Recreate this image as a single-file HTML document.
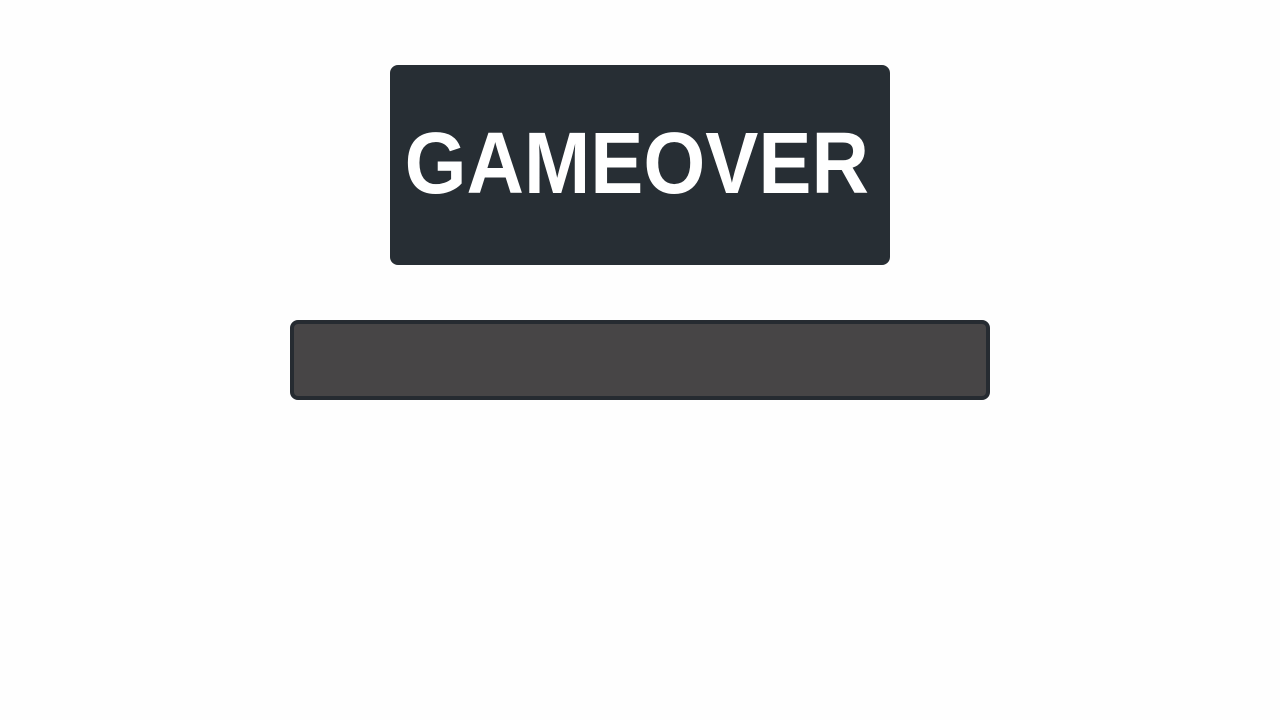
<!DOCTYPE html>
<html><head><style>
html,body{margin:0;padding:0;background:#fefefe;width:1280px;height:720px;overflow:hidden}
.box{position:absolute;left:390px;top:65px;width:500px;height:200px;background:#272e34;border-radius:8px}
.t{position:absolute;width:500px;text-align:center;color:#fff;font:bold 87px/1 "Liberation Sans",sans-serif}
.t span{display:inline-block;transform:scaleX(0.915);transform-origin:center}
.bar{position:absolute;left:290px;top:320px;width:692px;height:72px;border:4px solid #262b31;background:#474546;border-radius:8px}
</style></head><body>
<div class="box"></div>
<div class="t" style="left:383px;top:132px;line-height:64px;height:64px"><span style="line-height:64px">GAMEOVER</span></div>
<div class="bar"></div>
</body></html>
